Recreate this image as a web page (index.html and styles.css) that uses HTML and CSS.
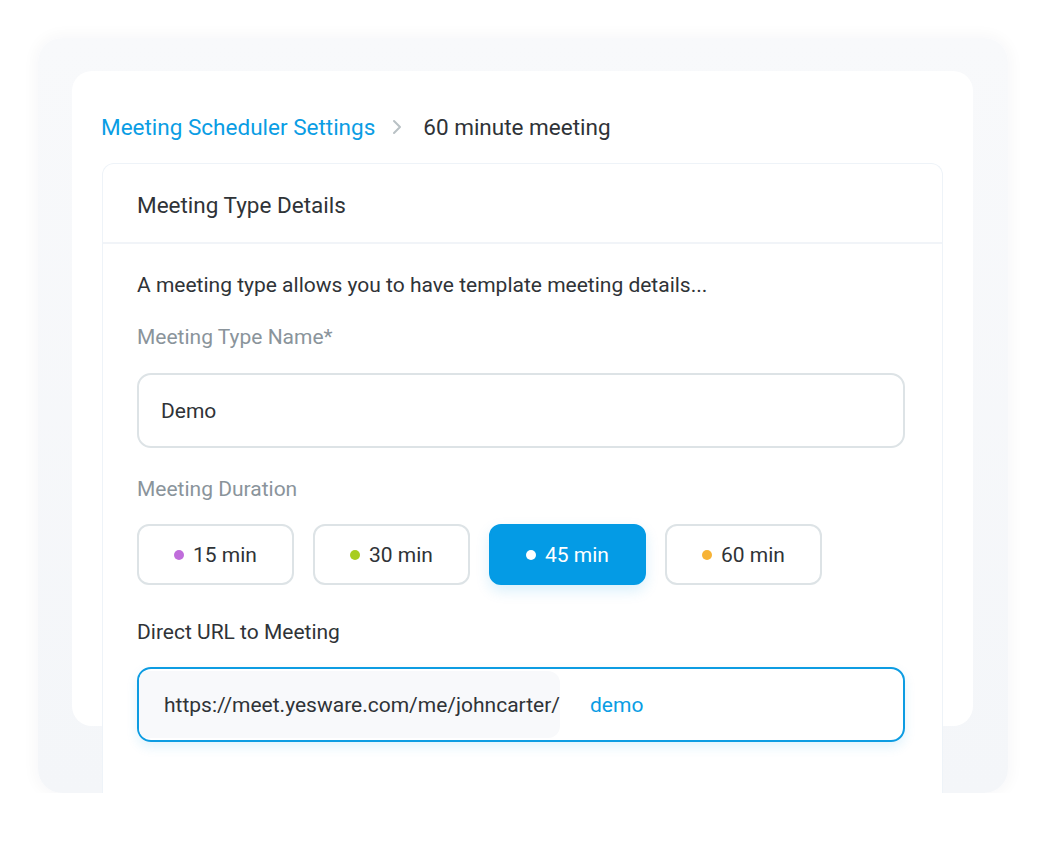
FILE: index.html
```html
<!DOCTYPE html>
<html lang="en">
<head>
    <meta charset="UTF-8">
    <meta name="viewport" content="width=device-width, initial-scale=1.0">
    <title>Meeting Scheduler Settings</title>
    <link rel="stylesheet" href="styles.css">
</head>
<body>
    <div class="frame">
        <div class="panel">
            <div class="breadcrumb">
                <a class="crumb-link" href="#">Meeting Scheduler Settings</a>
                <svg class="chevron" width="12" height="18" viewBox="0 0 12 18">
                    <path d="M3 3 L9 9 L3 15" fill="none" stroke="#b9c1c5" stroke-width="2" stroke-linecap="round" stroke-linejoin="round"/>
                </svg>
                <span class="crumb-current">60 minute meeting</span>
            </div>

            <div class="card">
                <div class="card-header">Meeting Type Details</div>
                <div class="card-body">
                    <p class="intro">A meeting type allows you to have template meeting details...</p>

                    <div class="label muted">Meeting Type Name*</div>
                    <div class="field">Demo</div>

                    <div class="label muted label-gap">Meeting Duration</div>
                    <div class="durations">
                        <div class="duration"><span class="dot dot-purple"></span>15 min</div>
                        <div class="duration"><span class="dot dot-green"></span>30 min</div>
                        <div class="duration active"><span class="dot dot-white"></span>45 min</div>
                        <div class="duration"><span class="dot dot-orange"></span>60 min</div>
                    </div>

                    <div class="label url-label">Direct URL to Meeting</div>
                    <div class="url-field">
                        <span class="url-prefix">https://meet.yesware.com/me/johncarter/</span>
                        <span class="url-slug">demo</span>
                    </div>
                </div>
            </div>
        </div>
    </div>
</body>
</html>
```

FILE: styles.css
```css
body {
    margin: 0;
    background: #ffffff;
    font-family: Roboto, "Liberation Sans", Arial, sans-serif;
    color: #2f3337;
}
.frame {
    margin: 38px 0 0 38px;
    width: 970px;
    height: 755px;
    box-sizing: border-box;
    padding: 33px 0 0 34px;
    background: linear-gradient(180deg, #f8f9fb 0%, #f4f6f9 100%);
    border-radius: 24px;
    box-shadow: 0 0 14px 4px rgba(30, 40, 60, 0.03);
    overflow: hidden;
}
.panel {
    width: 901px;
    height: 655px;
    box-sizing: border-box;
    padding: 40px 30px 0 30px;
    background: #ffffff;
    border-radius: 20px;
}
.breadcrumb {
    display: flex;
    align-items: center;
    height: 32px;
    font-size: 22.5px;
    margin-left: -1px;
}
.crumb-link {
    color: #0a9de4;
    text-decoration: none;
}
.chevron {
    margin: 0 20px 0 16px;
}
.crumb-current {
    color: #2f3337;
}
.card {
    margin-top: 20px;
    background: #ffffff;
    border: 1px solid #eef3f8;
    border-bottom: none;
    border-radius: 12px 12px 0 0;
}
.card-header {
    height: 80px;
    display: flex;
    align-items: center;
    padding-left: 34px;
    padding-top: 4px;
    box-sizing: border-box;
    font-size: 22.5px;
    border-bottom: 2px solid #f1f4f8;
}
.card-body {
    padding: 27px 37px 70px 34px;
}
.intro {
    margin: 0;
    font-size: 21px;
    line-height: 28px;
}
.label {
    font-size: 21px;
    line-height: 28px;
    margin-top: 24px;
}
.muted {
    color: #8a949b;
}
.label-gap {
    margin-top: 27px;
}
.field {
    margin-top: 22px;
    height: 75px;
    box-sizing: border-box;
    border: 2px solid #dde3e6;
    border-radius: 14px;
    padding-left: 22px;
    display: flex;
    align-items: center;
    font-size: 21px;
}
.durations {
    display: flex;
    gap: 19px;
    margin-top: 21px;
}
.duration {
    width: 157px;
    height: 61px;
    box-sizing: border-box;
    border: 2px solid #dde3e6;
    border-radius: 12px;
    display: flex;
    align-items: center;
    justify-content: center;
    font-size: 21px;
}
.duration.active {
    background: #049be5;
    border-color: #049be5;
    color: #ffffff;
    box-shadow: 0 6px 14px rgba(4, 155, 229, 0.15);
}
.dot {
    width: 10px;
    height: 10px;
    border-radius: 50%;
    margin-right: 9px;
}
.dot-purple {
    background: #c06ddb;
}
.dot-green {
    background: #a8cd20;
}
.dot-white {
    background: #ffffff;
}
.dot-orange {
    background: #f7b336;
}
.url-label {
    margin-top: 33px;
}
.url-field {
    margin-top: 21px;
    height: 75px;
    box-sizing: border-box;
    border: 2px solid #0d9ce2;
    border-radius: 14px;
    display: flex;
    align-items: stretch;
    font-size: 21px;
    box-shadow: 0 5px 12px rgba(4, 155, 229, 0.12);
    overflow: hidden;
}
.url-prefix {
    display: flex;
    align-items: center;
    padding-left: 25px;
    background: #f8f9fb;
    border-radius: 0 12px 12px 0;
    margin-top: 2px;
    margin-bottom: 2px;
}
.url-slug {
    display: flex;
    align-items: center;
    padding-left: 30px;
    color: #0a9de4;
}
```
